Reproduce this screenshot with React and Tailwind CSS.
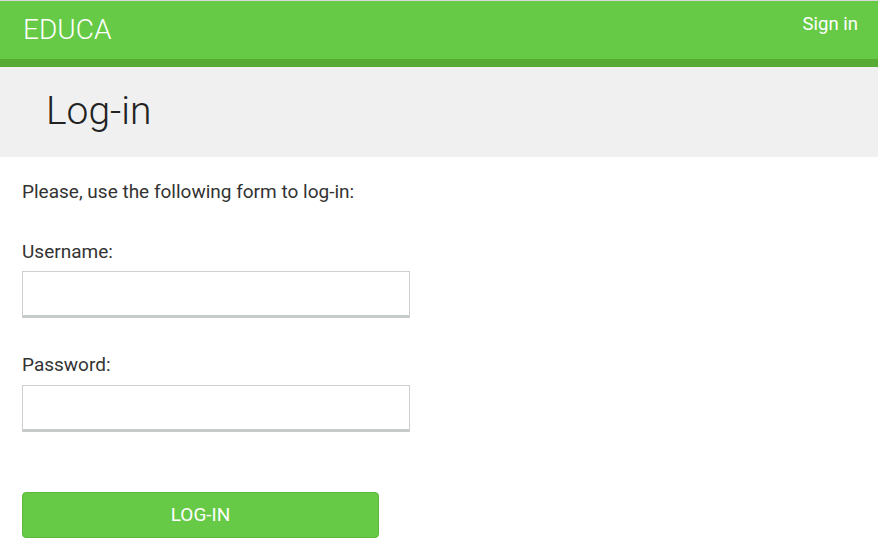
import React, { useState } from 'react';

export default function App() {
    const [username, setUsername] = useState('');
    const [password, setPassword] = useState('');

    return (
        <div className="min-h-screen bg-white font-['Roboto',sans-serif]">
            <div className="border-t border-[#d8d8d8] bg-[#66ca46] border-b-[8px] border-b-[#57ab35] h-[67px] flex items-start justify-between pl-[23px] pr-[20px]">
                <div className="text-white text-[28px] font-light leading-none pt-[15px]">EDUCA</div>
                <a href="#" className="text-white text-[18.5px] leading-none pt-[14px]">Sign in</a>
            </div>
            <div className="bg-[#f0f0f0] h-[90px] flex items-center pl-[46px]">
                <h1 className="text-[39px] font-light text-[#222] leading-none pb-[2px]">Log-in</h1>
            </div>
            <div className="px-[22px] pt-[24px]">
                <p className="text-[19px] text-[#333] leading-[22px]">Please, use the following form to log-in:</p>
                <form className="mt-[38px]" onSubmit={(e) => e.preventDefault()}>
                    <label htmlFor="username" className="block text-[19px] text-[#333] leading-[22px]">Username:</label>
                    <input id="username" type="text" value={username} onChange={(e) => setUsername(e.target.value)}
                        className="block mt-[8px] w-[388px] h-[47px] border border-[#cfcfcf] border-b-[3px] border-b-[#c8ccc8] bg-white px-2 text-[16px] outline-none" />
                    <label htmlFor="password" className="block mt-[36px] text-[19px] text-[#333] leading-[22px]">Password:</label>
                    <input id="password" type="password" value={password} onChange={(e) => setPassword(e.target.value)}
                        className="block mt-[9px] w-[388px] h-[47px] border border-[#cfcfcf] border-b-[3px] border-b-[#c8ccc8] bg-white px-2 text-[16px] outline-none" />
                    <button type="submit" className="block mt-[60px] w-[357px] h-[46px] rounded-[4px] bg-[#66ca46] border border-[#5cb83e] text-white text-[19px] uppercase">Log-in</button>
                </form>
            </div>
        </div>
    );
}
